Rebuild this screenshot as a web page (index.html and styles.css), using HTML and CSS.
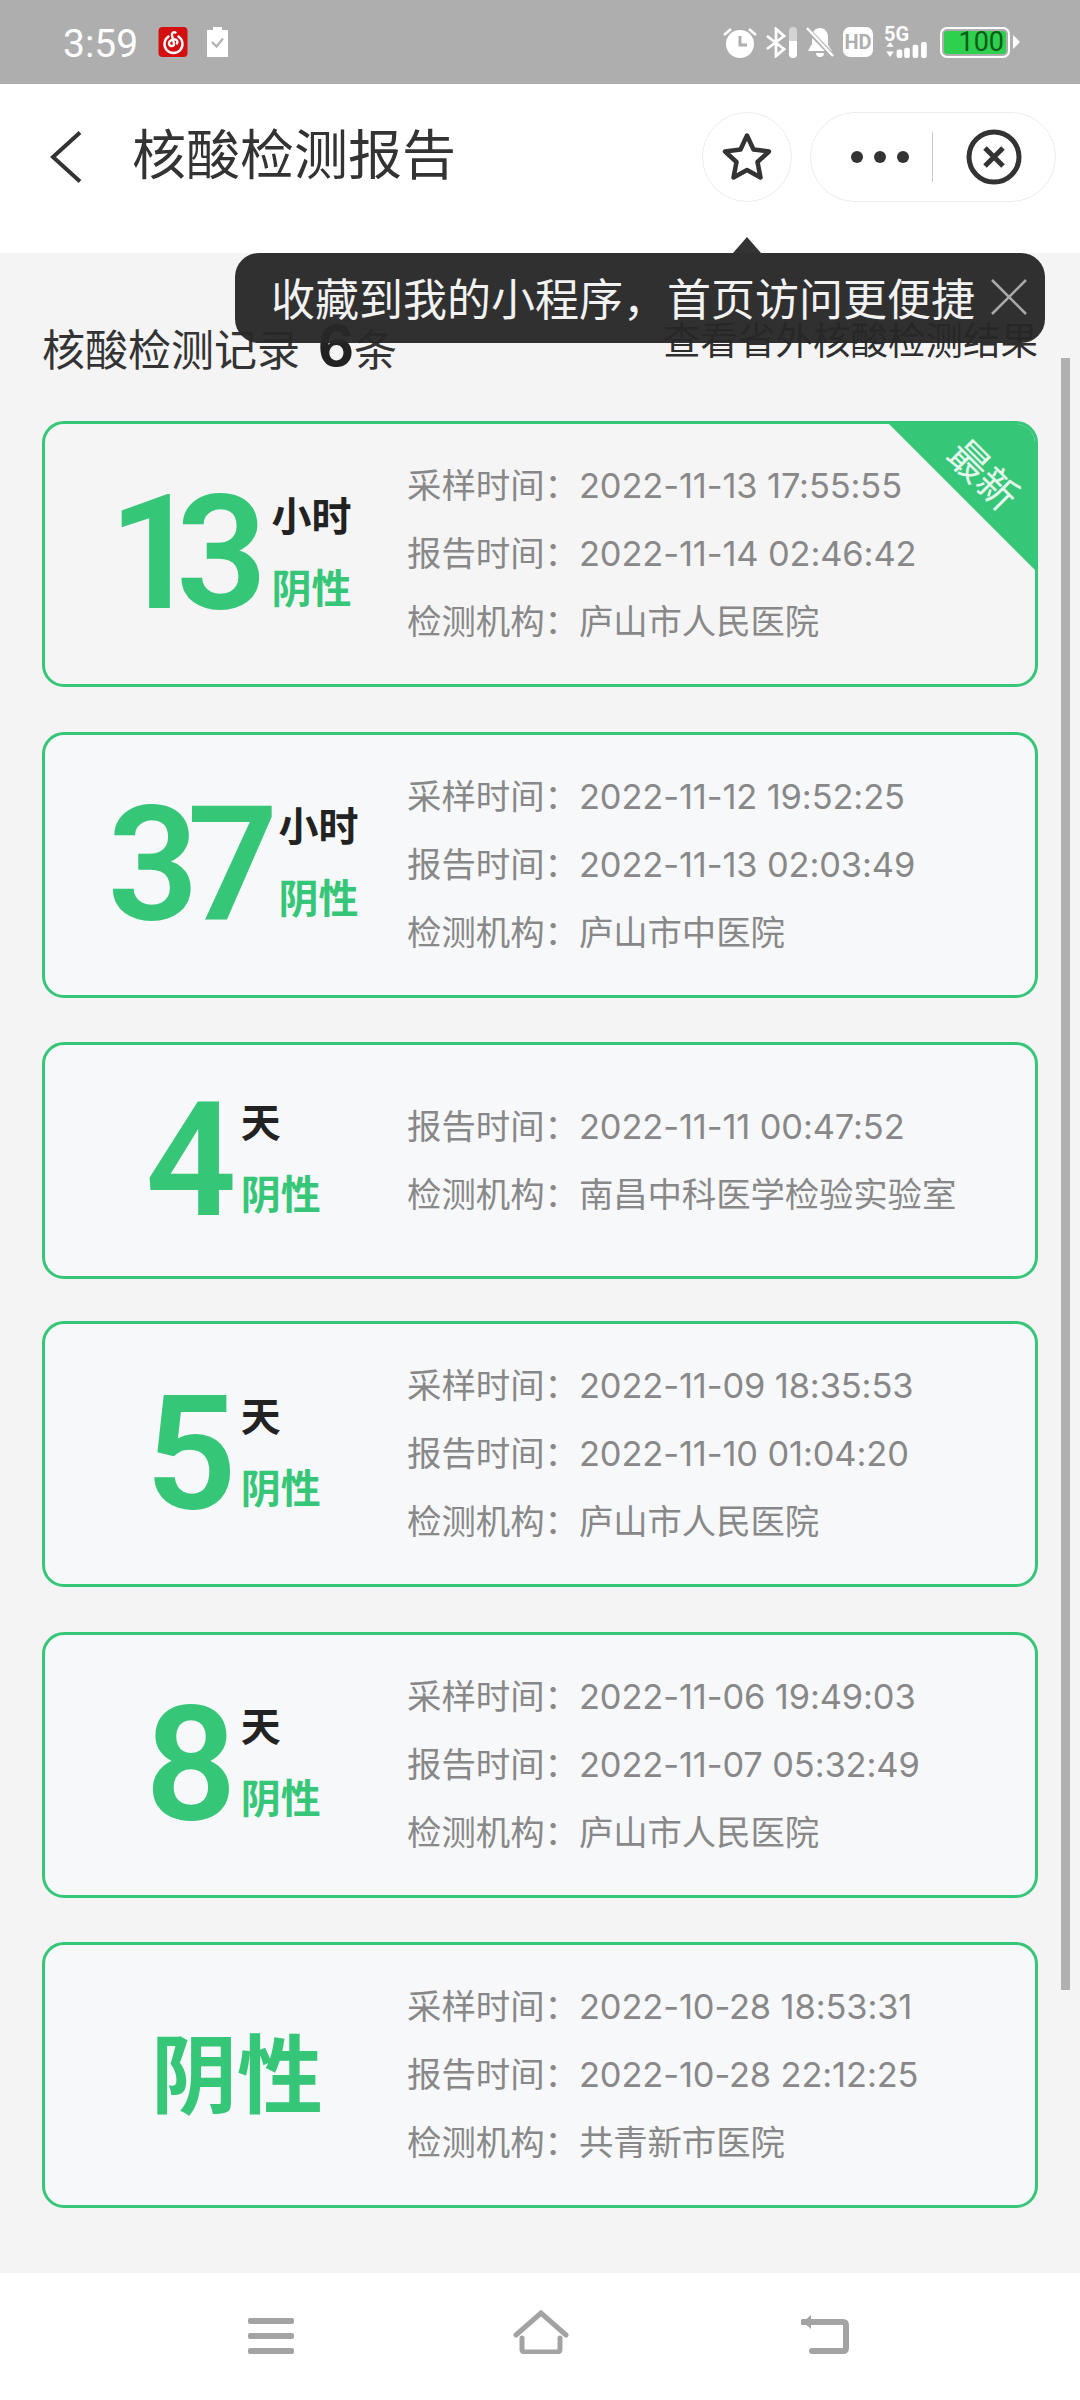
FILE: index.html
```html
<!DOCTYPE html>
<html lang="zh-CN">
<head>
  <meta charset="UTF-8">
  <title>核酸检测报告</title>
  <link rel="stylesheet" href="styles.css">
</head>
<body>

<div class="status">
  <span class="time">3:59</span>
  <svg class="ic-net" width="30" height="30" viewBox="0 0 29 30">
    <rect width="29" height="30" rx="4" fill="#d3100f"/>
    <path d="M10 9.5a9 9 0 1 0 10 0M17 5.5c-2-1-4 .5-3.500 3l2 8c.5 2.500-3 3.500-4.500 1.500-1.500-2.500.5-5.500 5.500-5.500 2 0 3 2 2 4" fill="none" stroke="#fff" stroke-width="2.400" stroke-linecap="round"/>
  </svg>
  <svg class="ic-clip" width="21" height="30" viewBox="0 0 21 30">
    <path d="M0 3h6V0h9v3h6v27H0z" fill="#fff"/>
    <path d="M5 15l4.500 4.500L16 11.500" fill="none" stroke="#b4b4b4" stroke-width="2.400"/>
  </svg>

  <div class="status-right">
    <svg width="34" height="31" viewBox="0 0 34 31">
      <circle cx="17" cy="17" r="14" fill="#fff"/>
      <path d="M17 9v9h7" fill="none" stroke="#aeaeae" stroke-width="3"/>
      <path d="M1 8l7-6M33 8l-7-6" stroke="#fff" stroke-width="2.500"/>
    </svg>
    <svg width="31" height="31" viewBox="0 0 31 31">
      <path d="M1 9l17 13-8 7V2l8 7L1 22" fill="none" stroke="#fff" stroke-width="2.800"/>
      <rect x="23" y="0" width="8" height="31" rx="4" fill="#d4d4d4"/>
      <path d="M23 14h8v13a4 4 0 0 1-8 0z" fill="#fff"/>
    </svg>
    <svg width="28" height="31" viewBox="0 0 28 31">
      <path d="M14 1c5 0 8 4 8 9v8l4 6H2l1-2 3-5v-7c0-5 3-9 8-9zM10 26h8a4 4 0 0 1-8 0z" fill="#fff"/>
      <path d="M0 1l28 29" stroke="#aeaeae" stroke-width="5"/>
      <path d="M1 1l26 28" stroke="#fff" stroke-width="2.500"/>
    </svg>
    <span class="hd">HD</span>
    <div class="sig">
      <span class="sig-text">5G</span>
      <svg width="45" height="16" viewBox="0 0 45 17">
        <path d="M5 0l4 5H1zM5 16L1 10h8z" fill="#fff"/>
        <rect x="12" y="8" width="6" height="9" rx="2" fill="#fff"/>
        <rect x="20" y="6" width="6" height="11" rx="2" fill="#fff"/>
        <rect x="29" y="3" width="6" height="14" rx="2" fill="#fff"/>
        <rect x="38" y="0" width="6" height="17" rx="2" fill="#fff"/>
      </svg>
    </div>
    <div class="batt"><span class="batt-in">100</span></div>
    <i class="batt-tip"></i>
  </div>
</div>

<div class="nav">
  <svg class="back" width="32" height="52" viewBox="0 0 32 52">
    <path d="M30 1.500L3 26l27 24.500" fill="none" stroke="#333" stroke-width="4"/>
  </svg>
  <span class="nav-title">核酸检测报告</span>
  <div class="star-btn">
    <svg width="50" height="50" viewBox="0 0 50 50">
      <path d="M25 3.500l6.500 14 15.500 2-11.500 10.500 3 15.500L25 38l-13.500 7.500 3-15.500L3 19.500l15.500-2z" fill="none" stroke="#333" stroke-width="4.500" stroke-linejoin="round"/>
    </svg>
  </div>
  <div class="capsule">
    <div class="dots"><i></i><i></i><i></i></div>
    <div class="cap-line"></div>
    <svg width="56" height="56" viewBox="0 0 56 56">
      <circle cx="28" cy="28" r="25" fill="none" stroke="#333" stroke-width="5"/>
      <path d="M19 19l18 18M37 19L19 37" stroke="#333" stroke-width="5"/>
    </svg>
  </div>
</div>

<div class="page">
  <div class="top-row">
    <span class="count">核酸检测记录 <b>6</b>条</span>
    <span class="other">查看省外核酸检测结果</span>
  </div>

  <div class="card first">
    <div class="left">
      <span class="num tight-13">13</span>
      <div class="unit"><span class="u1">小时</span><span class="u2">阴性</span></div>
    </div>
    <div class="info">
      <p>采样时间：<span>2022-11-13 17:55:55</span></p>
      <p>报告时间：<span>2022-11-14 02:46:42</span></p>
      <p>检测机构：<span>庐山市人民医院</span></p>
    </div>
    <div class="ribbon"></div>
    <span class="ribbon-text">最新</span>
  </div>

  <div class="card">
    <div class="left">
      <span class="num tight-37">37</span>
      <div class="unit"><span class="u1">小时</span><span class="u2">阴性</span></div>
    </div>
    <div class="info">
      <p>采样时间：<span>2022-11-12 19:52:25</span></p>
      <p>报告时间：<span>2022-11-13 02:03:49</span></p>
      <p>检测机构：<span>庐山市中医院</span></p>
    </div>
  </div>

  <div class="card short">
    <div class="left">
      <span class="num">4</span>
      <div class="unit"><span class="u1">天</span><span class="u2">阴性</span></div>
    </div>
    <div class="info">
      <p>报告时间：<span>2022-11-11 00:47:52</span></p>
      <p>检测机构：<span>南昌中科医学检验实验室</span></p>
    </div>
  </div>

  <div class="card">
    <div class="left">
      <span class="num">5</span>
      <div class="unit"><span class="u1">天</span><span class="u2">阴性</span></div>
    </div>
    <div class="info">
      <p>采样时间：<span>2022-11-09 18:35:53</span></p>
      <p>报告时间：<span>2022-11-10 01:04:20</span></p>
      <p>检测机构：<span>庐山市人民医院</span></p>
    </div>
  </div>

  <div class="card">
    <div class="left">
      <span class="num">8</span>
      <div class="unit"><span class="u1">天</span><span class="u2">阴性</span></div>
    </div>
    <div class="info">
      <p>采样时间：<span>2022-11-06 19:49:03</span></p>
      <p>报告时间：<span>2022-11-07 05:32:49</span></p>
      <p>检测机构：<span>庐山市人民医院</span></p>
    </div>
  </div>

  <div class="card">
    <div class="left">
      <span class="big-neg">阴性</span>
    </div>
    <div class="info">
      <p>采样时间：<span>2022-10-28 18:53:31</span></p>
      <p>报告时间：<span>2022-10-28 22:12:25</span></p>
      <p>检测机构：<span>共青新市医院</span></p>
    </div>
  </div>

  <div class="scrollbar"></div>
</div>

<div class="tip">
  <span class="tip-text">收藏到我的小程序，首页访问更便捷</span>
  <svg width="38" height="36" viewBox="0 0 38 36">
    <path d="M2 1l34 34M36 1L2 35" stroke="#a8a8a8" stroke-width="2.600"/>
  </svg>
</div>
<i class="tip-arrow"></i>

<div class="bottom">
  <svg width="46" height="36" viewBox="0 0 46 36">
    <rect y="0" width="46" height="6" rx="2" fill="#a3a3a3"/>
    <rect y="15" width="46" height="6" rx="2" fill="#a3a3a3"/>
    <rect y="30" width="46" height="6" rx="2" fill="#a3a3a3"/>
  </svg>
  <svg class="home" width="56" height="44" viewBox="0 0 56 44">
    <path d="M3 25L28 3l25 22" fill="none" stroke="#a3a3a3" stroke-width="5" stroke-linecap="round"/>
    <path d="M9 28v11q0 3 3 3h32q3 0 3-3V28" fill="none" stroke="#a3a3a3" stroke-width="5" stroke-linecap="round"/>
  </svg>
  <svg width="48" height="40" viewBox="0 0 48 40">
    <path d="M2 8h40q3 0 3 3v23q0 3-3 3H11" fill="none" stroke="#a3a3a3" stroke-width="6" stroke-linecap="round"/>
    <path d="M2 8l8-7v14z" fill="#a3a3a3"/>
  </svg>
</div>

</body>
</html>
```
FILE: styles.css
```css
* { box-sizing: border-box; }

body {
  margin: 0;
  width: 1080px;
  height: 2400px;
  position: relative;
  overflow: hidden;
  background-color: #f4f4f4;
  font-family: "Noto Sans CJK SC", "Noto Sans", sans-serif;
}
p { margin: 0; }
i { display: block; }

/* status bar */
.status {
  height: 84px;
  padding: 0 60px 0 63px;
  background-color: #aeaeae;
  display: flex;
  align-items: center;
  color: #fff;
}
.time {
  width: 74px;
  padding-top: 4px;
  font-family: Roboto, sans-serif;
  font-size: 39px;
  line-height: 44px;
}
.ic-net { margin-left: 21px; }
.ic-clip { margin-left: 19px; }
.status-right {
  margin-left: auto;
  display: flex;
  align-items: center;
  gap: 9px;
}
.hd {
  width: 30px;
  height: 30px;
  border-radius: 7px;
  background-color: #fff;
  color: #aeaeae;
  font-family: Roboto, sans-serif;
  font-weight: 700;
  font-size: 20px;
  line-height: 30px;
  text-align: center;
}
.sig {
  width: 45px;
  margin-left: 2px;
  display: flex;
  flex-direction: column;
}
.sig-text {
  font-family: Roboto, sans-serif;
  font-weight: 700;
  font-size: 20px;
  line-height: 15px;
}
.batt {
  width: 70px;
  height: 31px;
  margin-left: 2px;
  padding: 2px;
  border: 2px solid #fff;
  border-radius: 7px;
}
.batt-in {
  display: block;
  height: 23px;
  padding-right: 2px;
  background-color: #2fd04d;
  border-radius: 3px;
  color: #0a5c1a;
  font-family: Roboto, sans-serif;
  font-size: 27px;
  line-height: 23px;
  text-align: right;
}
.batt-tip {
  width: 7px;
  height: 14px;
  margin-left: -6px;
  background-color: #fff;
  clip-path: polygon(0 0, 100% 50%, 0 100%);
}

/* title bar */
.nav {
  height: 169px;
  padding: 0 24px 24px 50px;
  background-color: #fff;
  display: flex;
  align-items: center;
}
.nav-title {
  margin-left: 50px;
  margin-bottom: 10px;
  font-size: 54px;
  line-height: 70px;
  color: #333;
}
.star-btn {
  width: 90px;
  height: 90px;
  margin-left: auto;
  border: 1px solid #ececec;
  border-radius: 50%;
  display: flex;
  align-items: center;
  justify-content: center;
}
.capsule {
  width: 246px;
  height: 90px;
  margin-left: 18px;
  padding-left: 40px;
  border: 1px solid #ececec;
  border-radius: 45px;
  display: flex;
  align-items: center;
}
.dots {
  display: flex;
  gap: 11px;
}
.dots i {
  width: 12px;
  height: 12px;
  border-radius: 50%;
  background-color: #333;
}
.cap-line {
  width: 1px;
  height: 50px;
  margin-left: 23px;
  background-color: #c8c8c8;
}
.capsule svg { margin-left: 33px; }

/* list */
.page {
  height: 2020px;
  padding: 0 42px;
  position: relative;
  overflow: hidden;
}
.top-row {
  height: 168px;
  padding-top: 64px;
  display: flex;
  justify-content: space-between;
  color: #333;
}
.count {
  font-size: 43px;
  line-height: 60px;
}
.count b {
  margin-left: 8px;
  font-family: Inter, sans-serif;
  font-weight: 700;
  font-size: 56px;
  line-height: 50px;
  color: #222;
}
.other {
  margin-top: -9px;
  font-size: 37.500px;
  line-height: 60px;
  color: #2e2e2e;
}

.card {
  height: 266px;
  margin-bottom: 44.500px;
  border: 3px solid #36c678;
  border-radius: 22px;
  background-color: #f7f8fa;
  display: flex;
  align-items: center;
  position: relative;
  overflow: hidden;
}
.card.first { background-color: #f5f5f5; }
.card.short {
  height: 237px;
  margin-bottom: 42px;
}

.left {
  width: 362px;
  padding-left: 14px;
  display: flex;
  align-items: center;
  justify-content: center;
  gap: 4px;
}
.first .left { padding-right: 6px; }
.num {
  font-family: Roboto, sans-serif;
  font-weight: 560;
  font-size: 160px;
  line-height: 170px;
  color: #36c678;
}
/* the two digit numbers sit closer than Roboto spaces them */
.tight-13 { letter-spacing: -24px; padding-right: 24px; }
.tight-37 { letter-spacing: -12px; padding-right: 8px; }
.unit {
  margin-bottom: 9px;
  display: flex;
  flex-direction: column;
  gap: 20px;
}
.u1, .u2 {
  font-weight: 700;
  font-size: 40px;
  line-height: 52px;
  white-space: nowrap;
}
.u1 { color: #222; }
.u2 { color: #36c678; }
.big-neg {
  margin-bottom: 10px;
  margin-left: 8px;
  font-weight: 700;
  font-size: 86px;
  line-height: 110px;
  color: #36c678;
}

.info {
  margin-bottom: 3px;
  display: flex;
  flex-direction: column;
  gap: 21px;
  font-size: 34.400px;
  line-height: 45px;
  color: #888;
}
.info span {
  font-family: Inter, "Noto Sans CJK SC", sans-serif;
  letter-spacing: -0.1px;
}

.ribbon {
  width: 152px;
  height: 152px;
  background-color: #36c678;
  clip-path: polygon(0 0, 100% 0, 100% 100%);
  position: absolute;
  top: -3px;
  right: -3px;
}
.ribbon-text {
  position: absolute;
  top: 27px;
  right: 10px;
  font-size: 40px;
  line-height: 44px;
  color: #e4f7ec;
  transform: rotate(45deg);
}

.scrollbar {
  width: 9px;
  height: 1632px;
  background-color: #b0b0b0;
  position: absolute;
  top: 105px;
  right: 10px;
}

/* favourite hint */
.tip {
  width: 810px;
  height: 90px;
  padding: 0 17px 2px 36px;
  border-radius: 24px;
  background-color: rgba(40, 40, 40, 0.96);
  display: flex;
  align-items: center;
  justify-content: space-between;
  position: absolute;
  top: 253px;
  left: 235px;
}
.tip-text {
  font-size: 44px;
  line-height: 60px;
  color: #f2f2f2;
}
.tip-arrow {
  width: 28px;
  height: 16px;
  background-color: #333;
  clip-path: polygon(50% 0, 100% 100%, 0 100%);
  position: absolute;
  top: 237px;
  left: 733px;
}

/* system nav */
.bottom {
  height: 127px;
  padding: 0 231px 46px 248px;
  background-color: #fff;
  display: flex;
  align-items: flex-end;
  justify-content: space-between;
}
.home { margin-right: 14px; }
```
